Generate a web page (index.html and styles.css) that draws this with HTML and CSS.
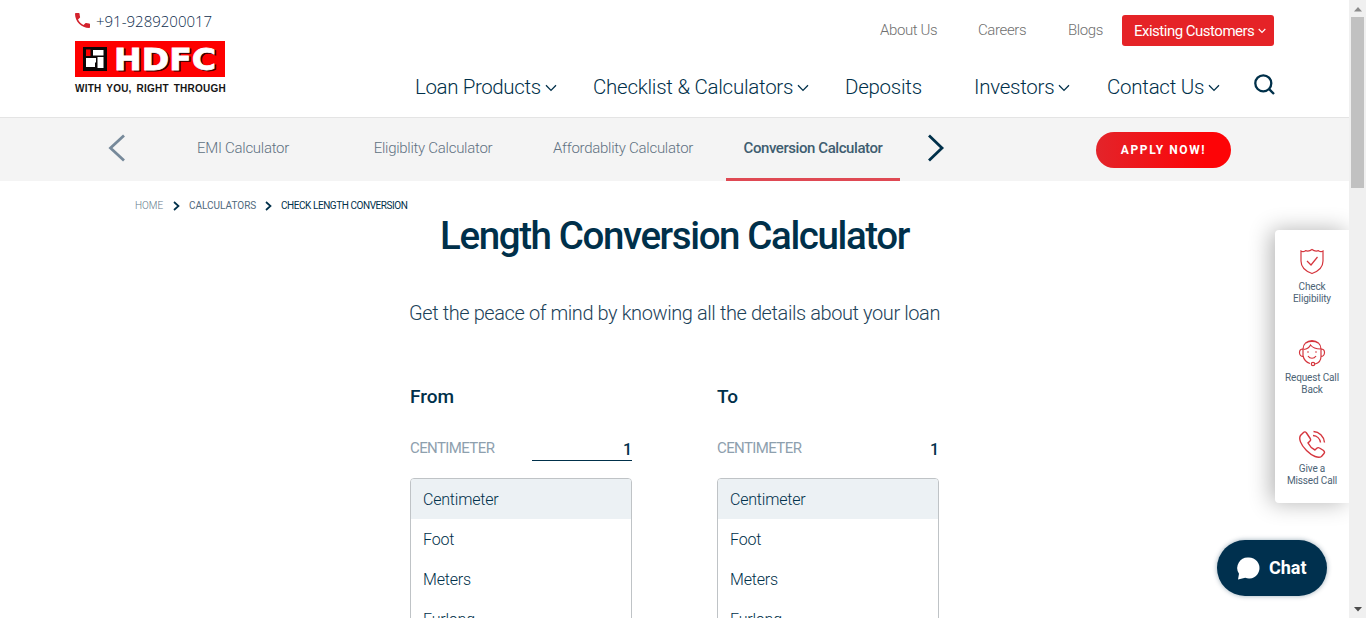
FILE: index.html
```html
<!DOCTYPE html>
<html lang="en">
<head>
<meta charset="utf-8">
<title>Length Conversion Calculator</title>
<link rel="stylesheet" href="styles.css">
</head>
<body>
<svg class="defs" width="0" height="0">
  <symbol id="down" viewBox="0 0 12 8"><path d="M1 1.2 6 6.4l5-5.2" fill="none" stroke="currentColor" stroke-width="1.3"/></symbol>
</svg>
<div class="page">
  <header class="header">
    <div class="brand">
      <a class="phone">
        <svg width="15" height="15" viewBox="3 3 18 18"><path fill="#d3222d" d="M6.62 10.79c1.44 2.83 3.76 5.14 6.59 6.59l2.2-2.2c.27-.27.67-.36 1.02-.24 1.12.37 2.33.57 3.57.57.55 0 1 .45 1 1V20c0 .55-.45 1-1 1C10.61 21 3 13.390 3 4c0-.55.45-1 1-1h3.500c.55 0 1 .45 1 1 0 1.250.2 2.450.57 3.570.11.35.03.74-.25 1.020z"/></svg>
        <span>+91-9289200017</span>
      </a>
      <svg class="logo" width="150" height="36" viewBox="0 0 150 36">
        <rect width="150" height="36" fill="#fe0000"/>
        <rect x="8" y="6" width="24" height="24" fill="#0c0606"/>
        <path d="M11 8.500h4.500V15H11z" fill="#fe0000"/>
        <path d="M18 9h10.500v5.500H18zM22.500 16h6v11h-6zM11 17h10v4.500h-5.500H20V26h-9z" fill="#fff"/>
        <g class="logo-text">
          <text x="40.500" y="30" textLength="102" lengthAdjust="spacingAndGlyphs" fill="#300" stroke="#300">HDFC</text>
          <text x="39" y="28.500" textLength="102" lengthAdjust="spacingAndGlyphs" fill="#fff" stroke="#fff">HDFC</text>
        </g>
      </svg>
      <div class="tagline">WITH YOU, RIGHT THROUGH</div>
    </div>
    <div class="menus">
      <nav class="top-links">
        <a>About Us</a><a>Careers</a><a>Blogs</a>
        <button class="customers"><span>Existing Customers</span><svg width="8" height="6" viewBox="0 0 8 6"><path d="m.7 1 3.300 3.500L7.300 1" fill="none" stroke="#fff" stroke-width="1.100"/></svg></button>
      </nav>
      <nav class="main-nav">
        <a class="tight"><span>Loan Products</span><svg width="12" height="8"><use href="#down"/></svg></a>
        <a><span>Checklist &amp; Calculators</span><svg width="12" height="8"><use href="#down"/></svg></a>
        <a>Deposits</a>
        <a><span>Investors</span><svg width="12" height="8"><use href="#down"/></svg></a>
        <a><span>Contact Us</span><svg width="12" height="8"><use href="#down"/></svg></a>
        <svg class="search" width="21" height="21" viewBox="0 0 21 21" fill="none" stroke="#00304a" stroke-width="2.300"><circle cx="9.300" cy="9.300" r="8"/><path d="m15 15 5 5"/></svg>
      </nav>
    </div>
  </header>

  <div class="tabs">
    <svg class="prev" width="18" height="28" viewBox="0 0 18 28"><path d="M16 1.500 2.500 14 16 26.500" fill="none" stroke="#76899a" stroke-width="2.800"/></svg>
    <a class="tab">EMI Calculator</a>
    <a class="tab">Eligiblity Calculator</a>
    <a class="tab">Affordablity Calculator</a>
    <a class="tab active">Conversion Calculator</a>
    <svg class="next" width="18" height="28" viewBox="0 0 18 28"><path d="M2 1.500 15 14 2 26.500" fill="none" stroke="#00304a" stroke-width="2.800"/></svg>
    <button class="apply">APPLY NOW!</button>
  </div>

  <main>
    <div class="crumbs">
      <a class="home">HOME</a>
      <svg width="7" height="10" viewBox="0 0 7 10"><path d="m1 1 4.500 4L1 9" fill="none" stroke="#00304a" stroke-width="1.700"/></svg>
      <a class="mid">CALCULATORS</a>
      <svg width="7" height="10" viewBox="0 0 7 10"><path d="m1 1 4.500 4L1 9" fill="none" stroke="#00304a" stroke-width="1.700"/></svg>
      <span class="here">CHECK LENGTH CONVERSION</span>
    </div>
    <h1>Length Conversion Calculator</h1>
    <p class="lead">Get the peace of mind by knowing all the details about your loan</p>
    <div class="converter">
      <section>
        <h2>From</h2>
        <div class="value"><label>CENTIMETER</label><output class="editable">1</output></div>
        <ul class="units"><li class="selected">Centimeter</li><li>Foot</li><li>Meters</li><li>Furlong</li></ul>
      </section>
      <section>
        <h2>To</h2>
        <div class="value"><label>CENTIMETER</label><output>1</output></div>
        <ul class="units"><li class="selected">Centimeter</li><li>Foot</li><li>Meters</li><li>Furlong</li></ul>
      </section>
    </div>
  </main>
</div>

<aside class="actions">
  <a>
    <svg width="28" height="28" viewBox="0 0 28 28" fill="none" stroke="#d5353d" stroke-width="1.200"><path d="M3 3c1.500 1 3 .8 4.500-.4C10 3.500 12 3 14 1.500c2 1.500 4 2 6.500 1.100C22 3.800 23.500 4 25 3v10c0 6-4 10-11 12.500C7 23 3 19 3 13z"/><path d="m9 13 4 4 6.500-8"/></svg>
    <span>Check<br>Eligibility</span>
  </a>
  <a>
    <svg width="28" height="28" viewBox="0 0 28 28" fill="none" stroke="#d5353d" stroke-width="1.200"><path d="M5 10C5 5 9 1.500 14 1.500S23 5 23 10M5 17c1 4 4 6.500 7 7.500M8 4c3-2 9-2 12 0M5.500 10.500c4-.5 6-2 7-4.500 2 2.500 6 4 10 4"/><path d="M5 10c-2 0-3.500 1.500-3.500 3.500S3 17.500 5 17.500zM23 10c2 0 3.500 1.500 3.500 3.500S25 17.500 23 17.500zM23 17.500c0 4-2 6.500-6 7.500"/><circle cx="15" cy="25" r="1.700"/><path d="M10 17c2 3 6 3 8 0"/><path d="M10 12.500v1M18 12.500v1" stroke-width="1.800"/></svg>
    <span>Request Call<br>Back</span>
  </a>
  <a>
    <svg width="28" height="28" viewBox="0 0 28 28" fill="none" stroke="#d5353d" stroke-width="1.400"><path d="M5.500 2.500 2.500 5.500c-2 3 0 9 6 15s12 8 15 6l2.500-3c1-1 .5-2-.5-3l-4-2.500c-1.200-.8-2-.5-3 .5l-1.500 1.500c-3-1.500-5.500-4-7-7l2-2c.8-.8.8-1.500.2-2.500L8.500 3c-.8-1.200-2-1.500-3-.5z"/><path d="M15.500 1.500c5.500.2 10.500 5 11 11M15 5.500c4 .2 7 3.200 7.500 7"/></svg>
    <span>Give a<br>Missed Call</span>
  </a>
</aside>

<button class="chat">
  <svg width="23" height="23" viewBox="0 0 23 23"><path fill="#fff" d="M12 .5a10.500 10.500 0 1 1-3.800 20.300L1 22.500l1-5.800A10.500 10.500 0 0 1 12 .5z"/></svg>
  <span>Chat</span>
</button>

<div class="scrollbar">
  <svg width="8" height="5"><path d="M0 4.500 4 0l4 4.500z" fill="#8b8b8b"/></svg>
  <div class="thumb"></div>
  <svg width="8" height="5"><path d="M0 0h8L4 4.500z" fill="#4d4d4d"/></svg>
</div>
</body>
</html>
```
FILE: styles.css
```css
* { box-sizing: border-box; }
body {
  margin: 0;
  height: 618px;
  overflow: hidden;
  background: #fff;
  color: #00304a;
  font-family: Roboto, "Liberation Sans", sans-serif;
  font-weight: 300;
}
button { border: 0; padding: 0; font: inherit; }
svg { display: block; flex: none; }
.defs { position: absolute; }
.page { width: 1349px; height: 618px; overflow: hidden; }
a, span, label { white-space: nowrap; }

/* Header */
.header {
  display: flex;
  height: 118px;
  border-bottom: 1px solid #e4e4e4;
  padding-left: 75px;
}
.brand { width: 340px; padding-top: 12px; }
.phone { display: flex; align-items: center; height: 18px; gap: 6px; font: 300 15px/18px "Open Sans", sans-serif; color: #0c2c4c; letter-spacing: 0; }
.phone svg { margin-top: -1px; }
.logo { margin-top: 11px; }
.logo-text { font: bold 30px "DejaVu Sans", sans-serif; stroke-width: .8; }
.tagline { margin-top: 6px; font: bold 10px/12px "Liberation Sans", sans-serif; letter-spacing: .22px; word-spacing: 2px; color: #161616; white-space: nowrap; }
.menus { width: 859px; padding-top: 15px; }
.top-links { display: grid; grid-template-columns: 98px 90px 54px 152px; margin-left: 465px; height: 31px; line-height: 30px; font-size: 15px; letter-spacing: -.38px; color: #707070; }
.customers { display: flex; align-items: center; gap: 4px; padding-left: 12px; border-radius: 3px; background: #e52327; color: #fff; font-weight: 400; letter-spacing: -.5px; }
.main-nav { display: grid; grid-template-columns: 178px 252px 129px 133px 147px 21px; margin-top: 23px; height: 36px; align-items: center; font-size: 20.5px; letter-spacing: -.26px; }
.main-nav a { display: flex; align-items: center; gap: 4px; }
.main-nav .tight { letter-spacing: -.38px; }
.main-nav a svg { margin-top: 1px; }
.search { margin-top: -5px; }

/* Calculator tabs */
.tabs { display: flex; height: 63px; background: #f4f4f4; padding-left: 108px; color: #5f7182; font-size: 15px; line-height: 60px; letter-spacing: -.27px; }
.prev, .next { margin-top: 16px; }
.tab { width: 190px; text-align: center; height: 63px; }
.prev + .tab { margin-left: 22px; }
.tab.active { width: 174px; margin-left: 8px; color: #3f5d70; font-weight: 500; border-bottom: 3px solid #df4953; letter-spacing: -.43px; }
.next { margin-left: 27px; }
.apply { width: 135px; height: 36px; margin: 14px 0 0 151px; border-radius: 18px; background: linear-gradient(90deg, #e3242a, #fd0407 80%); color: #fff; font-size: 12px; line-height: 36px; font-weight: 700; letter-spacing: 1.6px; }

/* Breadcrumbs and titles */
.crumbs { display: grid; grid-template-columns: 38px 16px 76px 16px 150px; align-items: center; margin: 15px 0 0 135px; height: 20px; font-size: 10px; line-height: 20px; }
.crumbs svg { margin-top: -1px; }
.home { color: #63788a; }
.mid { color: #50697d; font-weight: 400; }
.here { font-weight: 400; letter-spacing: -.44px; }
h1 { margin: -4px 0 0; height: 48px; font-size: 38.5px; line-height: 48px; font-weight: 500; text-align: center; letter-spacing: -1.4px; }
.lead { margin: 37px 0 0; text-align: center; font-size: 20px; line-height: 32px; letter-spacing: -.41px; color: #1c4259; }

/* Converter */
.converter { display: grid; grid-template-columns: 222px 222px; column-gap: 85px; margin: 54px 0 0 410px; }
h2 { margin: 0; font-size: 19px; line-height: 28px; font-weight: 500; }
.value { display: flex; justify-content: space-between; height: 30px; margin-top: 20px; font-size: 15px; }
.value label { color: #8ea0ae; line-height: 35px; font-weight: 400; letter-spacing: -.6px; }
output { width: 100px; text-align: right; font-size: 16px; font-weight: 500; line-height: 37px; }
.editable { border-bottom: 1px solid #00304a; }
.units { margin: 17px 0 0; padding: 0; list-style: none; border: 1px solid #bfc3c6; border-radius: 4px; overflow: hidden; font-size: 16px; letter-spacing: -.2px; }
.units li { height: 40px; line-height: 41px; padding-left: 12px; }
.units .selected { background: #ecf1f4; }

/* Floating quick actions */
.actions { position: absolute; left: 1275px; top: 230px; width: 74px; height: 273px; background: #fff; border-radius: 4px 0 0 4px; box-shadow: -4px 0 22px rgba(0,0,0,.3); clip-path: inset(-30px 0 -30px -36px); padding-top: 18px; }
.actions a { display: flex; flex-direction: column; align-items: center; height: 91px; gap: 5px; font-size: 10px; line-height: 12px; text-align: center; font-weight: 400; color: #4c6375; letter-spacing: -.15px; }
.chat { position: absolute; left: 1217px; top: 540px; width: 110px; height: 56px; border-radius: 28px; background: #00304e; color: #fff; display: flex; align-items: center; gap: 9px; padding-left: 20px; font-size: 18px; font-weight: 700; box-shadow: 0 0 5px rgba(0,48,78,.4); }
.chat span { margin-top: -2px; }

/* Page scrollbar */
.scrollbar { position: absolute; left: 1349px; top: 0; width: 17px; height: 618px; background: #f0f0f0; display: flex; flex-direction: column; align-items: center; padding: 7px 0 6px; }
.thumb { width: 13px; height: 171px; margin-top: 5px; margin-bottom: auto; background: #c1c1c1; }
```
